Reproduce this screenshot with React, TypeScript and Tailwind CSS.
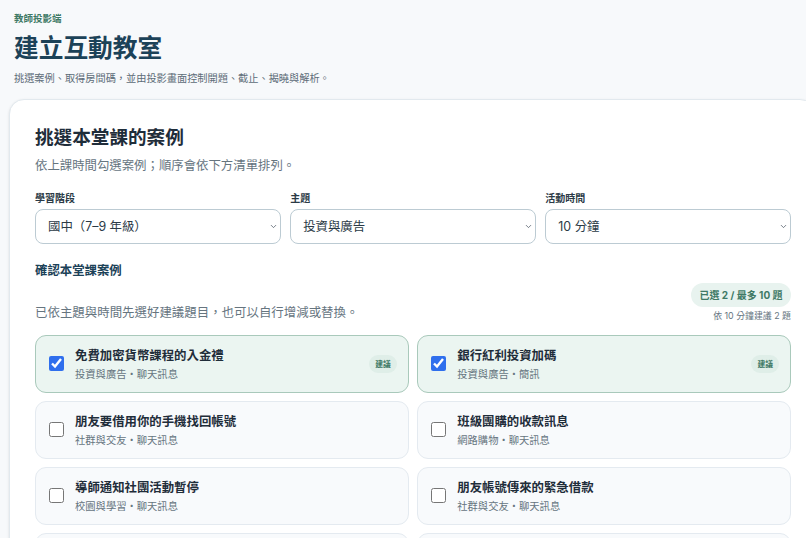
import { ChevronDown } from "lucide-react";

const cases = [
  { title: "免費加密貨幣課程的入金禮", meta: "投資與廣告・聊天訊息", picked: true },
  { title: "銀行紅利投資加碼", meta: "投資與廣告・簡訊", picked: true },
  { title: "朋友要借用你的手機找回帳號", meta: "社群與交友・聊天訊息", picked: false },
  { title: "班級團購的收款訊息", meta: "網路購物・聊天訊息", picked: false },
  { title: "導師通知社團活動暫停", meta: "校園與學習・聊天訊息", picked: false },
  { title: "朋友帳號傳來的緊急借款", meta: "社群與交友・聊天訊息", picked: false },
  { title: "", meta: "", picked: false },
  { title: "", meta: "", picked: false },
];

const filters = [
  { label: "學習階段", value: "國中（7–9 年級）" },
  { label: "主題", value: "投資與廣告" },
  { label: "活動時間", value: "10 分鐘" },
];

const CaseCard = ({ title, meta, picked }: { title: string; meta: string; picked: boolean }) => (
  <label
    className={`flex h-[57.5px] items-center rounded-[11px] border pl-[13px] pr-[11px] ${
      picked ? "border-[#a9c9bb] bg-[#ebf5f1]" : "border-[#e4eaf0] bg-[#f8fafc]"
    }`}
  >
    <input
      type="checkbox"
      defaultChecked={picked}
      className="m-0 h-[15px] w-[15px] shrink-0 accent-[#2f6fed]"
    />
    <span className="ml-[11px] flex min-w-0 flex-1 flex-col pt-[2px]">
      <span className="text-[12.4px] font-bold leading-[18px] text-[#1f2d3a]">{title}</span>
      <span className="mt-[2px] text-[10.3px] leading-[15px] text-[#66757f]">{meta}</span>
    </span>
    {picked && (
      <span className="rounded-full bg-[#dfeee8] px-[6px] text-[7.8px] font-bold leading-[18px] text-[#3f7a66]">
        建議
      </span>
    )}
  </label>
);

export default function App() {
  return (
    <div className="h-[538px] w-[806px] overflow-hidden bg-[#f7f9fb] font-['Inter','Noto_Sans_CJK_TC',sans-serif]">
      <header className="px-[14px] pt-[12px]">
        <p className="text-[9.5px] font-bold leading-[13px] text-[#3f7a66]">教師投影端</p>
        <h1 className="mt-[6px] text-[24.7px] font-bold leading-[34px] text-[#1c4258]">建立互動教室</h1>
        <p className="mt-[6px] text-[10.2px] leading-[14px] text-[#5d6c78]">
          挑選案例、取得房間碼，並由投影畫面控制開題、截止、揭曉與解析。
        </p>
      </header>

      <main className="ml-[9px] mt-[14px] w-[806px] rounded-[15px] border border-[#e2e9ee] bg-white px-[25px] pt-[25px] pb-6 shadow-sm">
        <h2 className="text-[18.6px] font-bold leading-[24px] text-[#1f2d3a]">挑選本堂課的案例</h2>
        <p className="mt-[8px] text-[12.4px] leading-[18px] text-[#66757f]">
          依上課時間勾選案例；順序會依下方清單排列。
        </p>

        <div className="mt-[16px] grid w-[756px] grid-cols-3 gap-x-[9.5px]">
          {filters.map((f) => (
            <div key={f.label}>
              <label className="block text-[10px] font-bold leading-[14px] text-[#2b3a46]">{f.label}</label>
              <div className="relative mt-[4px]">
                <select
                  defaultValue={f.value}
                  className="h-[35px] w-full appearance-none rounded-[8px] border border-[#bccbd3] bg-white pl-[12px] pr-[16px] pt-[2px] text-[12.4px] text-[#2b3a46]"
                >
                  <option>{f.value}</option>
                </select>
                <ChevronDown className="pointer-events-none absolute right-[3px] top-[13px] h-[9px] w-[9px] text-[#4b5563]" />
              </div>
            </div>
          ))}
        </div>

        <div className="mt-[18px] flex w-[756px] justify-between">
          <div className="flex flex-col justify-between">
            <h3 className="text-[12.4px] font-bold leading-[18px] text-[#1c4258]">確認本堂課案例</h3>
            <p className="mb-[1px] text-[12.45px] leading-[18px] text-[#66757f]">
              已依主題與時間先選好建議題目，也可以自行增減或替換。
            </p>
          </div>
          <div className="mt-[21px] flex flex-col items-end">
            <span className="rounded-full bg-[#e8f3ef] px-[8.5px] text-[10px] font-bold leading-[24px] text-[#3f7a66]">
              已選 2 / 最多 10 題
            </span>
            <span className="mt-[2px] text-[8.9px] leading-[14px] text-[#66757f]">依 10 分鐘建議 2 題</span>
          </div>
        </div>

        <div className="mt-[12px] grid w-[756px] grid-cols-2 gap-x-[8.5px] gap-y-[8.5px]">
          {cases.map((c, i) => (
            <CaseCard key={i} {...c} />
          ))}
        </div>
      </main>
    </div>
  );
}
